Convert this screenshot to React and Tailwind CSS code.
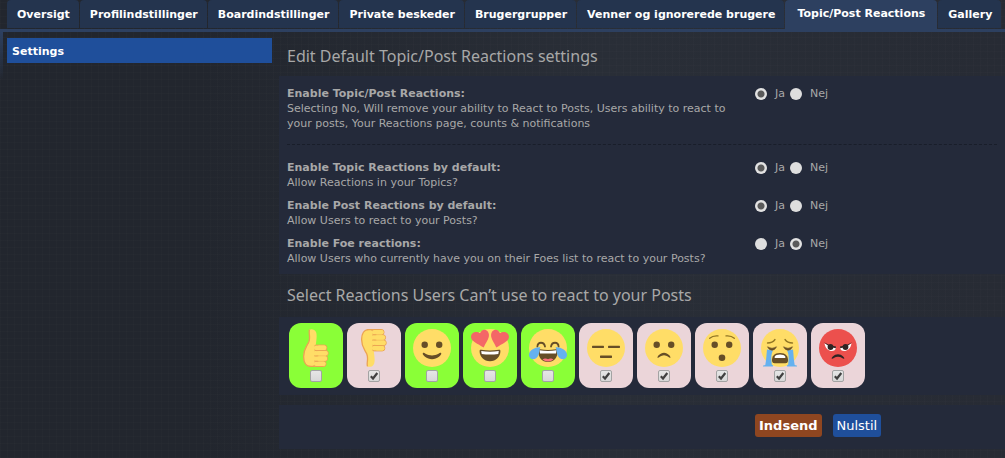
import React from "react";

const tabs = [
  "Oversigt",
  "Profilindstillinger",
  "Boardindstillinger",
  "Private beskeder",
  "Brugergrupper",
  "Venner og ignorerede brugere",
  "Topic/Post Reactions",
  "Gallery",
];

const YELLOW = "#ffdd67";
const BROWN = "#664e27";

function Hand({ down }) {
  return (
    <g transform={down ? "matrix(1 0 0 -1 0 38)" : undefined}>
      <path
        d="M12.500 .6C14 -.3 18 -.2 19.200 3.500C20.200 7 19.300 11 18.800 16H25L27 37.500H14C9 37.500 6.600 33 6.600 27.500C6.600 20 9.500 18 11.800 13C13.800 8 11.300 4 12.500 .6Z"
        fill={YELLOW}
      />
      <path
        d="M12.500 .6C11.300 4 13.800 8 11.800 13C9.500 18 6.600 20 6.600 27.500C6.600 33 9 37.500 14 37.500H27"
        fill="none"
        stroke="#eba352"
        strokeWidth="1.300"
      />
      <g fill={YELLOW} stroke="#eba352" strokeWidth="1">
        <rect x="16.500" y="32" width="12.500" height="5.500" rx="2.500" />
        <rect x="16" y="26.700" width="14.500" height="5.500" rx="2.500" />
        <rect x="16" y="21.400" width="15.200" height="5.500" rx="2.500" />
        <rect x="16.500" y="16.100" width="13.300" height="5.500" rx="2.500" />
      </g>
      <g fill={YELLOW}>
        <rect x="20" y="16.600" width="9.300" height="4.500" rx="2" />
        <rect x="20" y="21.900" width="10.700" height="4.500" rx="2" />
        <rect x="20" y="27.200" width="10" height="4.500" rx="2" />
        <rect x="20" y="32.500" width="8.500" height="4.500" rx="2" />
      </g>
      <path d="M12 15C14 18 16 17 17.500 15.500V36H11L8.500 28Z" fill={YELLOW} />
    </g>
  );
}

function Eyes() {
  return (
    <g fill={BROWN}>
      <circle cx="11.700" cy="15.800" r="3.200" />
      <circle cx="26.200" cy="15.800" r="3.200" />
    </g>
  );
}

const faces = {
  up: <Hand />,
  down: <Hand down />,
  smile: (
    <>
      <circle cx="19" cy="19" r="19" fill={YELLOW} />
      <Eyes />
      <path d="M9.800 24.200C10.500 23.400 11.300 24 12.500 24.700C16.500 27 21.500 27 25.500 24.700C26.700 24 27.500 23.400 28.200 24.200C28.700 25 27.500 26.500 26 27.800C22 31 16 31 12 27.800C10.500 26.500 9.300 25 9.800 24.200Z" fill={BROWN} />
    </>
  ),
  hearts: (
    <>
      <circle cx="19" cy="19" r="19" fill={YELLOW} />
      <g fill="#f46767">
        <path d="M17.700 4.500C16.500 .2 11.200 -.8 9 4.300C5.300 1.300 -.5 3.500 .1 8.500C.6 12.500 6.500 14.500 12.700 18.600C15.200 12.700 18.900 8.800 17.700 4.500Z" />
        <path d="M20.300 4.500C21.500 .2 26.800 -.8 29 4.300C32.700 1.300 38.500 3.500 37.900 8.500C37.400 12.500 31.500 14.500 25.300 18.600C22.800 12.700 19.100 8.800 20.300 4.500Z" />
      </g>
      <path d="M8.600 22C8.600 21 9.200 20.600 10.200 20.800Q19 22 27.800 20.800C28.800 20.600 29.400 21 29.400 22C29.400 28 25 32.200 19 32.200S8.600 28 8.600 22Z" fill={BROWN} />
      <path d="M10.200 21.900Q19 23.400 27.800 21.900L27.300 25Q19 26 10.700 25Z" fill="#fff" />
    </>
  ),
  joy: (
    <>
      <circle cx="19" cy="19" r="19" fill={YELLOW} />
      <g fill="none" stroke={BROWN} strokeWidth="1.800" strokeLinecap="round">
        <path d="M8.400 17.500C8.800 12.500 15 12.500 16 17.500" />
        <path d="M22 17.500C23 12.500 29.200 12.500 29.600 17.500" />
      </g>
      <path d="M9.200 21.500C9.200 20.300 10 20.100 11 20.300Q19 21.500 27 20.300C28 20.100 28.800 20.300 28.800 21.500C28.800 28.500 25 33 19 33S9.200 28.500 9.200 21.500Z" fill={BROWN} />
      <path d="M10.500 21.300Q19 22.600 27.500 21.300L27 24.500H11Z" fill="#fff" />
      <path d="M13.500 30.500C16 28.600 18 29.700 19 30.200C20 29.700 22 28.600 24.500 30.500C21.500 33 16.500 33 13.500 30.500Z" fill="#ff717f" />
      <g fill="#65b1ef">
        <path d="M11.500 18.300C7 17.500 -.5 21 0 26.500C.5 31.500 7.500 31.200 9.300 26.500C10.500 23.500 10.400 20 11.500 18.300Z" />
        <path d="M26.500 18.300C31 17.500 38.500 21 38 26.500C37.500 31.500 30.500 31.200 28.700 26.500C27.500 23.500 27.600 20 26.500 18.300Z" />
      </g>
    </>
  ),
  neutral: (
    <>
      <circle cx="19" cy="19" r="19" fill={YELLOW} />
      <g fill={BROWN}>
        <rect x="5" y="16.700" width="12" height="2.200" rx=".6" />
        <rect x="21" y="16.700" width="12" height="2.200" rx=".6" />
        <rect x="13" y="26.500" width="12" height="2.400" rx=".6" />
      </g>
    </>
  ),
  frown: (
    <>
      <circle cx="19" cy="19" r="19" fill={YELLOW} />
      <Eyes />
      <path d="M12.600 28.700C11.800 28 15 23.700 19 23.700S26.200 28 25.400 28.700C24.600 29.500 22.500 26.300 19 26.300S13.400 29.500 12.600 28.700Z" fill={BROWN} />
    </>
  ),
  hushed: (
    <>
      <circle cx="19" cy="19" r="19" fill={YELLOW} />
      <Eyes />
      <circle cx="19" cy="28.700" r="3.300" fill={BROWN} />
      <path d="M6.700 9.300Q10 6.300 15 6.900M23 6.900Q28 6.300 31.300 9.300" fill="none" stroke="#917524" strokeWidth="1.300" strokeLinecap="round" />
    </>
  ),
  sob: (
    <>
      <circle cx="19" cy="19" r="19" fill={YELLOW} />
      <path d="M6.500 14Q11.500 14 14 10.500M24 10.500Q26.500 14 31.500 14" fill="none" stroke="#917524" strokeWidth="1.300" strokeLinecap="round" />
      <g fill="#65b1ef">
        <path d="M6 20.500L12 21.500C9.500 26 10.500 31 10.800 35.500C13 36.500 12.500 37.600 10 37.600H3C1.200 37.600 1.600 36.300 4.300 36C5.300 31 5.400 26 6 20.500Z" />
        <path d="M32 20.500L26 21.500C28.500 26 27.500 31 27.200 35.500C25 36.500 25.500 37.600 28 37.600H35C36.800 37.600 36.400 36.300 33.700 36C32.700 31 32.600 26 32 20.500Z" />
      </g>
      <path d="M6.500 17.800Q11 20.800 15.500 17.800Q14 21.200 11 21.200T6.500 17.800ZM22.500 17.800Q27 20.800 31.500 17.800Q30 21.200 27 21.200T22.500 17.800Z" fill={BROWN} stroke={BROWN} strokeWidth=".6" />
      <path d="M19 24C25 24 27 27.500 27 31C27 34 25.500 34.200 24 34.200H14C12.500 34.200 11 34 11 31C11 27.500 13 24 19 24Z" fill={BROWN} />
      <path d="M13.500 28C15 24.800 23 24.800 24.500 28C24.500 28.900 24 29 23.500 29H14.500C14 29 13.500 28.900 13.500 28Z" fill="#fff" />
    </>
  ),
  angry: (
    <>
      <circle cx="19" cy="19" r="19" fill="#ec504d" />
      <path d="M5.500 14.500L17 18.500C16.500 24 7 23.500 5.500 14.500ZM32.500 14.500L21 18.500C21.500 24 31 23.500 32.500 14.500Z" fill="#fff" />
      <g fill="#302424">
        <circle cx="11.500" cy="18" r="2.900" />
        <circle cx="26.500" cy="18" r="2.900" />
        <path d="M5 13.200Q11 17.200 17 17.500L16.800 19.200Q10 18.300 5 13.200ZM33 13.200Q27 17.200 21 17.500L21.200 19.200Q28 18.300 33 13.200Z" />
        <path d="M12.800 29.700C12 29 15 25.200 19 25.200S26 29 25.200 29.700C24.400 30.500 22.500 27.800 19 27.800S13.600 30.500 12.800 29.700Z" />
      </g>
    </>
  ),
};

const reactions = [
  { id: "up", name: "Like", blocked: false },
  { id: "down", name: "Dislike", blocked: true },
  { id: "smile", name: "Smile", blocked: false },
  { id: "hearts", name: "Love", blocked: false },
  { id: "joy", name: "Laugh", blocked: false },
  { id: "neutral", name: "Neutral", blocked: true },
  { id: "frown", name: "Sad", blocked: true },
  { id: "hushed", name: "Surprised", blocked: true },
  { id: "sob", name: "Crying", blocked: true },
  { id: "angry", name: "Angry", blocked: true },
];

function Radio({ name, value, label, checked }) {
  return (
    <label className="flex items-center gap-2">
      <input
        type="radio"
        name={name}
        value={value}
        defaultChecked={checked}
        className="size-3 appearance-none rounded-full bg-[#dedede] checked:bg-[radial-gradient(circle,#5a5a5a_0_3px,#e2e2e2_4px)]"
      />
      {label}
    </label>
  );
}

function Setting({ name, title, hint, value = "yes" }) {
  return (
    <div role="radiogroup" aria-labelledby={name + "-title"} className="flex">
      <div className="w-[468px] shrink-0 pr-4">
        <strong id={name + "-title"} className="block">
          {title}
        </strong>
        <span className="block">{hint}</span>
      </div>
      <div className="flex h-[15px] items-center gap-[5px]">
        <Radio name={name} value="yes" label="Ja" checked={value === "yes"} />
        <Radio name={name} value="no" label="Nej" checked={value === "no"} />
      </div>
    </div>
  );
}

function Reaction({ id, name, blocked }) {
  return (
    <label
      className={
        "flex h-[65px] w-[54px] flex-col items-center gap-[3px] rounded-xl pt-1.5 " +
        (blocked ? "bg-[#ebd5d9]" : "bg-[#8aff37]")
      }
    >
      <svg viewBox="0 0 38 38" className="size-[38px]" aria-hidden="true">
        {faces[id]}
      </svg>
      <span className="relative size-3">
        <input
          type="checkbox"
          aria-label={name}
          defaultChecked={blocked}
          className="peer block size-3 appearance-none rounded-xs border border-[#a3a3a3] bg-linear-to-b from-[#e6e6e6] to-[#d8d8d8]"
        />
        <svg viewBox="0 0 12 12" className="pointer-events-none absolute inset-0 hidden size-3 peer-checked:block" aria-hidden="true">
          <path d="M2.800 6.300L5 8.500L9.300 3" fill="none" stroke="#404040" strokeWidth="2.200" />
        </svg>
      </span>
    </label>
  );
}

export default function App() {
  return (
    <div className="min-h-screen bg-[#252a32] bg-[repeating-linear-gradient(0deg,#ffffff03_0_1px,transparent_1px_7px),repeating-linear-gradient(90deg,#ffffff03_0_1px,transparent_1px_7px),linear-gradient(90deg,#22262e,#22262e_20%,#292e37_60%,#272b34)] font-['Verdana','DejaVu_Sans',sans-serif] text-[11px] leading-[15px] text-[#a8a8a8]">
      <nav className="flex h-8 items-start gap-px overflow-hidden border-b-3 border-[#2d4060] pl-[7px] font-bold whitespace-nowrap text-white">
        {tabs.map((tab) => (
          <a
            key={tab}
            href="#"
            aria-current={tab === "Topic/Post Reactions" ? "page" : undefined}
            className={
              tab === "Topic/Post Reactions"
                ? "h-8 shrink-0 rounded-t-sm bg-[#2d4060] px-3 pt-1.5"
                : "h-7 shrink-0 rounded-t-sm bg-[#24344e] pt-[7px] pr-[9px] pl-2.5"
            }
          >
            {tab}
          </a>
        ))}
      </nav>

      <div className="flex">
        <div className="h-12 w-[3px] bg-linear-to-b from-[#2d4060] to-transparent" />
        <aside className="w-[273px] shrink-0 pt-1.5 pr-1 pl-1">
          <a href="#" className="block bg-[#1f4f9b] px-[5px] pt-1.5 pb-1 font-bold text-white">
            Settings
          </a>
        </aside>

        <form className="min-w-0 flex-1 pl-[3px]" onSubmit={(e) => e.preventDefault()}>
          <h2 className="flex h-11 items-center px-2 pt-1 font-['Trebuchet_MS','Noto_Sans',sans-serif] text-base">
            Edit Default Topic/Post Reactions settings
          </h2>
          <div className="bg-[#242a3a] px-2 pt-2.5 pb-2">
            <Setting
              name="enable"
              title="Enable Topic/Post Reactions:"
              hint="Selecting No, Will remove your ability to React to Posts, Users ability to react to your posts, Your Reactions page, counts & notifications"
            />
            <hr className="mt-[13px] mb-[15px] border-t border-dashed border-[#191e2a]" />
            <div className="flex flex-col gap-2">
              <Setting name="topic" title="Enable Topic Reactions by default:" hint="Allow Reactions in your Topics?" />
              <Setting name="post" title="Enable Post Reactions by default:" hint="Allow Users to react to your Posts?" />
              <Setting
                name="foe"
                title="Enable Foe reactions:"
                hint="Allow Users who currently have you on their Foes list to react to your Posts?"
                value="no"
              />
            </div>
          </div>

          <h2 className="flex h-[43px] items-center px-2 pb-0.5 font-['Trebuchet_MS','Noto_Sans',sans-serif] text-base">
            Select Reactions Users Can’t use to react to your Posts
          </h2>
          <div className="flex flex-wrap gap-1 bg-[#242a3a] px-2.5 pt-1.5 pb-[7px]">
            {reactions.map((r) => (
              <Reaction key={r.id} {...r} />
            ))}
          </div>

          <div className="mt-2.5 flex gap-[11px] bg-[#242a3a] pt-[9px] pb-3 pl-[476px] text-[13px] text-white">
            <button type="submit" className="h-[23px] rounded-[3px] bg-[#8f4620] px-1 font-bold">
              Indsend
            </button>
            <button type="reset" className="h-[23px] rounded-[3px] bg-[#1f4f9b] px-1">
              Nulstil
            </button>
          </div>
        </form>
      </div>
    </div>
  );
}
